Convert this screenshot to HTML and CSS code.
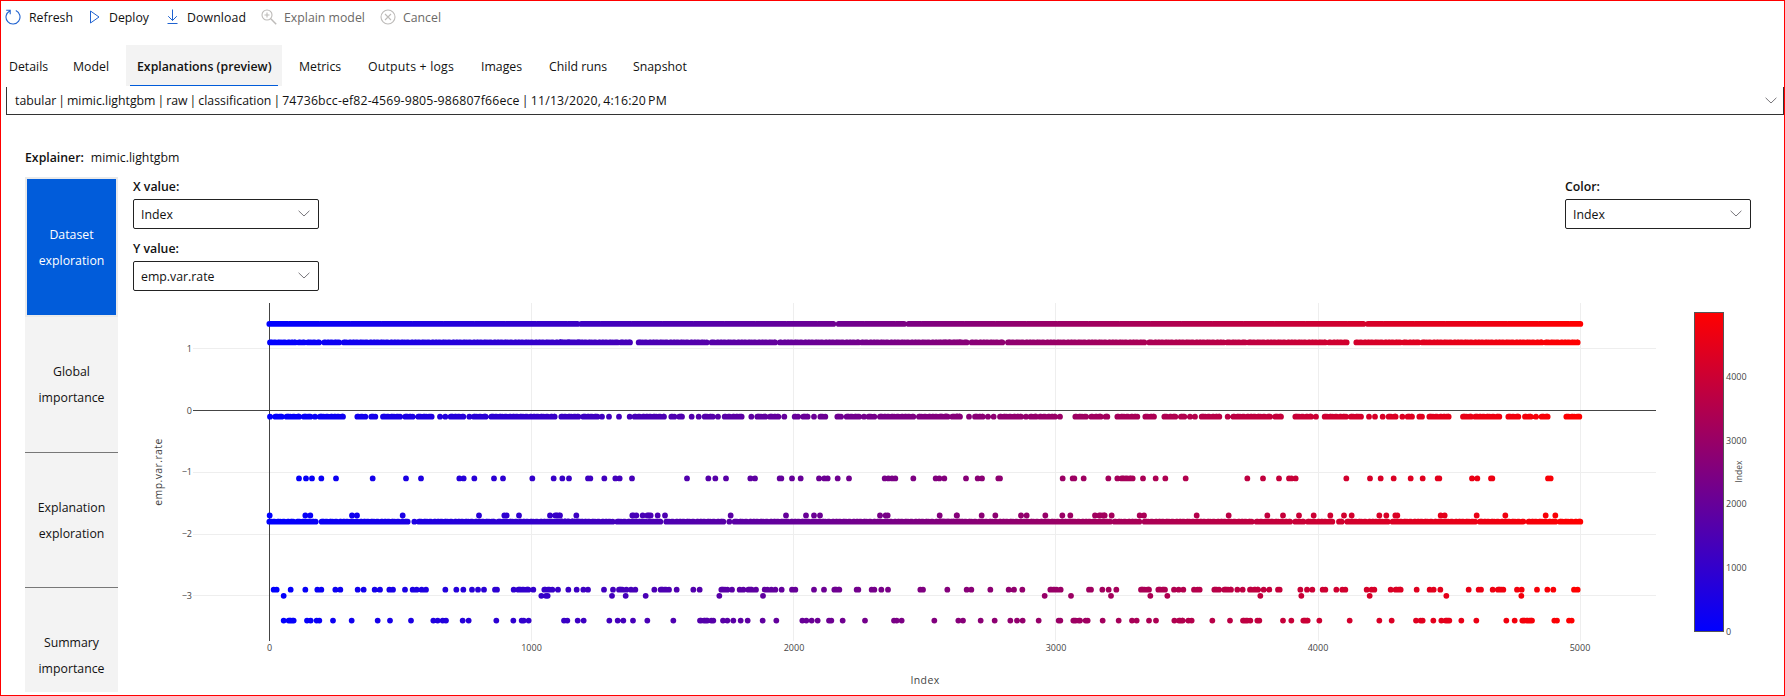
FILE: index.html
```html
<!DOCTYPE html>
<html lang="en">
<head>
<meta charset="utf-8">
<title>Explanations (preview)</title>
<link rel="stylesheet" href="styles.css">
</head>
<body>
<div class="page">
  <div class="commands">
    <button class="cmd cmd-refresh"><svg class="ico" width="16" height="16" viewBox="0 0 16 16"><path d="M4.6 1.9A7 7 0 1 0 10.8 1.6M1.2 1.2h4v4" fill="none" stroke="#1f62d0" stroke-width="1.1"/></svg><span>Refresh</span></button>
    <button class="cmd cmd-deploy"><svg class="ico" width="12" height="14" viewBox="0 0 12 14"><path d="M1.5 1v12L10 7z" fill="none" stroke="#1f62d0" stroke-width="1"/></svg><span>Deploy</span></button>
    <button class="cmd cmd-download"><svg class="ico" width="12" height="16" viewBox="0 0 12 16"><path d="M5.5 .5v11M1.2 7.2L5.5 11.5l4.3-4.3M.5 14.5h10" fill="none" stroke="#1f62d0" stroke-width="1"/></svg><span>Download</span></button>
    <button class="cmd cmd-explain off"><svg class="ico" width="16" height="16" viewBox="0 0 16 16"><g fill="none" stroke="#bdbbb9" stroke-width="1.1"><circle cx="6" cy="6" r="5"/><path d="M6 3.5v5M3.5 6h5"/><path d="M9.8 9.8l5.4 5.4" stroke-width="1.5"/></g></svg><span>Explain model</span></button>
    <button class="cmd cmd-cancel off"><svg class="ico" width="16" height="16" viewBox="0 0 16 16"><g fill="none" stroke="#bdbbb9" stroke-width="1.1"><circle cx="8" cy="8" r="7"/><path d="M5 5l6 6M11 5l-6 6"/></g></svg><span>Cancel</span></button>
  </div>
  <nav class="tabs">
    <a class="tab t1">Details</a><a class="tab t2">Model</a><a class="tab t3 active"><span>Explanations (preview)</span></a><a class="tab t4">Metrics</a><a class="tab t5">Outputs + logs</a><a class="tab t6">Images</a><a class="tab t7">Child runs</a><a class="tab t8">Snapshot</a>
  </nav>
  <div class="picker"><span class="picker-text">tabular | mimic.lightgbm | raw | classification | <span class="run-id">74736bcc-ef82-4569-9805-986807f66ece | 11/13/2020, 4:16:20 PM</span></span><svg class="chev" width="12" height="7" viewBox="0 0 12 7"><path d="M.6.8L6 6 11.4.8"/></svg></div>
  <div class="explainer"><b>Explainer:</b><span>mimic.lightgbm</span></div>
  <div class="body">
    <aside class="side">
      <div class="item selected">Dataset<br>exploration</div>
      <div class="item">Global<br>importance</div>
      <div class="item">Explanation<br>exploration</div>
      <div class="item last">Summary<br>importance</div>
    </aside>
    <main class="main">
      <div class="controls">
        <div class="axes">
          <label class="field"><b>X value:</b><span class="select">Index<svg class="chev" width="12" height="7" viewBox="0 0 12 7"><path d="M.6.8L6 6 11.4.8"/></svg></span></label>
          <label class="field"><b>Y value:</b><span class="select">emp.var.rate<svg class="chev" width="12" height="7" viewBox="0 0 12 7"><path d="M.6.8L6 6 11.4.8"/></svg></span></label>
        </div>
        <label class="field"><b>Color:</b><span class="select">Index<svg class="chev" width="12" height="7" viewBox="0 0 12 7"><path d="M.6.8L6 6 11.4.8"/></svg></span></label>
      </div>
      <svg class="chart" width="1650" height="394" viewBox="133 300 1650 394">
        <defs>
          <linearGradient id="scale-x" gradientUnits="userSpaceOnUse" x1="269.5" y1="0" x2="1580.5" y2="0"><stop offset="0" stop-color="#00f"/><stop offset="1" stop-color="#f00"/></linearGradient>
          <linearGradient id="scale-y" x1="0" y1="1" x2="0" y2="0"><stop offset="0" stop-color="#00f"/><stop offset="1" stop-color="#f00"/></linearGradient>
        </defs>
        <path class="grid" d="M531.5 303V641M793.5 303V641M1055.5 303V641M1318.5 303V641M1580.5 303V641M193 348.5H1656M193 472.5H1656M193 534.5H1656M193 595.5H1656"/>
        <path class="zero" d="M193 410.5H1656M269.5 303V641"/>
        <g id="points"></g>
        <g class="tick end"><text x="192" y="351.8">1</text><text x="192" y="413.8">0</text><text x="192" y="475.3">−1</text><text x="192" y="537.3">−2</text><text x="192" y="599.3">−3</text></g>
        <g class="tick mid"><text x="269.5" y="650.8">0</text><text x="531.5" y="650.8">1000</text><text x="794" y="650.8">2000</text><text x="1056" y="650.8">3000</text><text x="1318" y="650.8">4000</text><text x="1580" y="650.8">5000</text></g>
        <text class="title" x="925" y="684">Index</text>
        <text class="title ytitle" transform="translate(161.5 472) rotate(-90)">emp.var.rate</text>
        <rect x="1694.5" y="312.5" width="29" height="319" fill="url(#scale-y)" stroke="#555"/>
        <g class="tick"><text x="1726" y="379.8">4000</text><text x="1726" y="443.6">3000</text><text x="1726" y="506.8">2000</text><text x="1726" y="570.8">1000</text><text x="1726" y="634.5">0</text></g>
        <text class="title cbtitle" transform="translate(1742 471.5) rotate(-90)">Index</text>
      </svg>
    </main>
  </div>
</div>
<script src="chart.js"></script>
</body>
</html>
```
FILE: styles.css
```css
* { box-sizing: border-box; }
body { margin: 0; font-family: "Open Sans", "Noto Sans", sans-serif; font-size: 12.3px; color: #111; background: #fff; }
.page { width: 1785px; height: 696px; border: 1px solid #f00; overflow: hidden; }
.commands { display: flex; height: 44px; padding: 2px 0 14px 4px; }
.cmd { display: flex; align-items: center; padding: 0; border: 0; background: none; font: inherit; color: inherit; text-align: left; white-space: nowrap; }
.cmd span { line-height: 20px; padding-top: 2px; }
.off { color: #6b6967; }
.cmd-refresh { width: 84px; gap: 8px; }
.cmd-deploy { width: 78px; gap: 8px; }
.cmd-download { width: 94px; gap: 8px; letter-spacing: .1px; }
.cmd-explain { width: 119px; gap: 7px; }
.cmd-cancel { gap: 7px; }
.tabs { display: flex; height: 41px; line-height: 44px; white-space: nowrap; }
.tab { flex: none; }
.t1 { width: 64px; padding-left: 8px; }
.t2 { width: 61px; padding-left: 8px; }
.t3 { width: 156px; padding: 0 4px; background: #f3f3f3; font-weight: 600; }
.t3 span { display: block; height: 41px; border-bottom: 1px solid #015cda; padding-left: 7px; }
.t4 { width: 69px; padding-left: 17px; }
.t5 { width: 113px; padding-left: 17px; letter-spacing: .2px; }
.t6 { width: 68px; padding-left: 17px; }
.t7 { width: 84px; padding-left: 17px; }
.t8 { padding-left: 17px; }
.picker { display: flex; align-items: center; justify-content: space-between; height: 28px; margin: 1px 0 0 5px; padding: 0 6px 1px 8px; border: 1px solid #333; border-top: 0; }
.picker-text { word-spacing: -1.2px; }
.run-id { letter-spacing: .16px; }
.chev { flex: none; fill: none; stroke: #77757a; stroke-width: 1; }
.explainer { display: flex; gap: 7px; height: 62px; padding: 34px 0 0 24px; line-height: 18px; }
b { font-weight: 600; }
.body { display: flex; gap: 15px; padding-left: 24px; }
.side { width: 93px; height: 515px; background: #f3f3f3; overflow: hidden; text-align: center; line-height: 26px; }
.item { height: 135px; padding-top: 42px; border-bottom: 1px solid #777; }
.item.selected { height: 140px; padding-top: 43px; border: 2px solid #eaeaea; background: #015cda; color: #fff; }
.item:nth-child(2) { height: 136px; }
.main { width: 1650px; }
.controls { display: flex; justify-content: space-between; width: 1618px; height: 123px; }
.field { display: block; width: 186px; height: 62px; }
.field b { display: block; height: 22px; line-height: 20px; }
.select { display: flex; align-items: center; justify-content: space-between; height: 30px; padding: 0 8px 0 7px; border: 1px solid #222; border-radius: 2px; }
.select .chev { margin-bottom: 2px; }
.chart { display: block; font-family: "Open Sans", sans-serif; }
.grid { stroke: #eee; fill: none; }
.zero { stroke: #444; fill: none; }
.series { fill: none; stroke: url(#scale-x); stroke-width: 5.8; stroke-linecap: round; }
.tick { font-size: 9px; fill: #444; }
.end { text-anchor: end; }
.mid { text-anchor: middle; }
.title { font-size: 10.5px; fill: #444; text-anchor: middle; letter-spacing: .4px; }
.cbtitle { font-size: 8.5px; letter-spacing: 0; }
```
FILE: chart.js
```js
// Each row lists points and dense runs ("from-to") in third-pixel steps; "@n" sets the start offset.
const rows = {
  "1.4": "@540 268-1190 @1680 40-52 64-820 836-1032 1046-1200 @2820 0-1200 @3900 90-190 204-841",
  "1.1": "@540 270-345 357-372 384-417 433-477 492-1200 @1680 0-172 183-210 236-440 455-645 660-895 906-1200 @2820 0-80 95-187 204-613 628-850 862-915 927-1155 @3900 88-140 169-300 312-355 368-725 738-833",
  "-0.1": "@540 270 286-305 320-357 372-391 405 420-489 532-556 574-586 609-660 676-698 715-755 780 796 812-850 868 882-917 934-1124 1144-1195 @1680 52 70-112 126 147 177 209 224-312 334-343 358-366 395 416 434-458 474 494-545 574 592-616 630-655 673 704-714 730-743 762 781-796 832-843 860-897 912 926-943 960-1060 1077-1163 1177-1200 @2820 4-20 37-57 87 105-128 144 161 180-243 258 272-288 300-345 360 406-438 454-482 497-502 532-592 616-642 673-706 723-733 750 765 785-838 863 880-990 1006-1023 1066-1113 1128 @3900 74-138 153-183 207 225 248 266-287 307 323-336 358-366 388-446 489-513 526-598 625-655 675-692 708 725-743 799-838",
  "-1.1": "@540 357 378 396 424 468 578 678 723 838 851 883 942 969 1057 1121 1147 1167 @1680 84 91 133 166 179 216 381 445 466 498 571 585 659 664 696 722 777 793 803 833 867 974 985 996 1006 1060 1127 1138 1153 @2820 78 113 126 175 180 368 398 403 431 505 532 545-578 609 647 676 737 922 969 1017 1047 1054 1067 @3900 139 210 242 281 332 368 413 418 516 532 573 577 744 752",
  "-1.7": "@540 269 376 391 516 531 668 897 973 980 1017 1110 1126-1140 1189 @1680 217-229 248 262-272 293 315 512 678 738 762 780 960 977 983 1139 1190 @2820 51 125 166 243 260 316 367 391 465 478-494 515 599 612 770 866 982 1029 1077 1121 1171 @3900 132 155 238 259 286 292 422 434 530 616 737 766",
  "-1.8": "@540 268-340 352-407 425-683 703 717-942 955-1200 @1680 0-158 172-301 319-490 508 524-1200 @2820 0-510 524-598 614-935 950-1050 1066-1090 1104-1177 @3900 117-125 142-263 278-525 540-670 686-766 780-841",
  "-2.9": "@540 281 290 332 376 412 424 466 481 533 551 584 600 628 639 675 698 710 725 738 796 829 850 876 894 912 945 951 1001 1015-1045 1060 1093-1117 1134 1165 1190 @1680 70 84 132 159 177-187 199 213 226 283 302-327 350 400 419 484-502 516 539 550 565-575 588 614 622 634 646 665 696 706 762 792 823-838 890 895 935 943 964 984 1081 1089 1162 @2820 80 94 151 206 222 247 331-350 362 447 453 487 506 529 603-627 655-675 702 716 730 762 773 779 823-837 853-873 892 908 930-954 971 988 1014 1019 1081 1101 1117 1148 1156 1189 @3900 127 136 200 215 223 272 287-302 350 389 401 421 506 536 543 578 594-610 651 665 711 742 760 822 833",
  "-3": "@540 311 1084 1098 1103 @1680 156 197 257 478 609 @2820 314 393 513 631 682 961 1084 @3900 209 439 664",
  "-3.4": "@540 311 326-341 381 392 410 418 459 515 593 630 693 760 773 788 798 848 866 949 1000 1025 1031 1046 1152 1162 1193 @1680 71 148 173 190 219 262 340 420-442 454 460 489 502 520 542 563 608 649 727 739 755 773 807 814 848 915 1002 1010 1025 1123 1195 @2820 69 122 164 211 231 248 296 356 361 400-420 437 443 488 536 576 590 627 648 703 717-728 745 755 817 870 909-931 952 958 1029 1054 1090-1103 1138 @3900 149 238 275 348 362 368 400 424 437-448 484 529 619 644 667-696 763 771 807 815"
};

// Spacing pattern of neighbouring points inside a run.
const steps = [3, 6, 4, 9, 3, 5, 8, 4, 10, 3, 7];
const host = document.getElementById("points");

for (const [value, list] of Object.entries(rows)) {
  const y = (410.45 - 61.8 * Number(value)).toFixed(2);
  let base = 0, k = 0, d = "";
  const dot = p => { d += `M${((base + p) / 3).toFixed(2)} ${y}h.01`; };
  for (const token of list.split(" ")) {
    if (token[0] === "@") { base = Number(token.slice(1)); continue; }
    const [from, to] = token.split("-").map(Number);
    dot(from);
    if (to === undefined) continue;
    const dense = value === "1.4" ? 0.5 : 1;
    for (let p = from + 3; p < to; p += steps[k++ % steps.length] * dense) dot(p);
    dot(to);
  }
  const path = document.createElementNS("http://www.w3.org/2000/svg", "path");
  path.setAttribute("class", "series");
  path.setAttribute("d", d);
  host.appendChild(path);
}
```
